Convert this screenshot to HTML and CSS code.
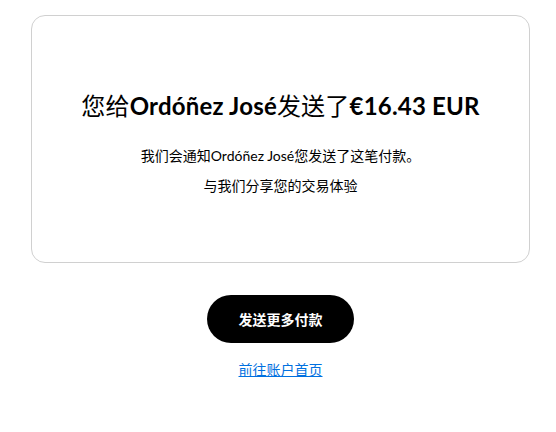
FILE: index.html
```html
<!DOCTYPE html>
<html lang="zh-CN">
<head>
<meta charset="utf-8">
<link rel="stylesheet" href="styles.css">
</head>
<body>
<main class="page">
  <section class="card">
    <h1 class="title">您给<b>Ordóñez José</b>发送了<b>€16.43 EUR</b></h1>
    <p class="line">我们会通知Ordóñez José您发送了这笔付款。</p>
    <p class="line">与我们分享您的交易体验</p>
  </section>
  <div class="actions">
    <button class="btn">发送更多付款</button>
    <a class="link" href="#">前往账户首页</a>
  </div>
</main>
</body>
</html>
```
FILE: styles.css
```css
html, body { margin: 0; padding: 0; background: #fff; }
body {
  font-family: "Lato", "Noto Sans CJK SC", sans-serif;
  color: #000;
}
.page {
  width: 499px;
  margin: 15px 0 0 31px;
  display: flex;
  flex-direction: column;
  align-items: center;
}
.card {
  box-sizing: border-box;
  width: 499px;
  height: 248px;
  border: 1px solid #d0d0d0;
  border-radius: 14px;
  display: flex;
  flex-direction: column;
  align-items: center;
  padding-top: 74px;
}
.title {
  margin: 0;
  font-size: 24px;
  line-height: 32px;
  font-weight: 400;
  letter-spacing: 0.2px;
}
.title b { font-weight: 700; }
.line {
  margin: 0;
  font-size: 14px;
  line-height: 20px;
}
.title + .line { margin-top: 24px; }
.line + .line { margin-top: 10px; }
.actions {
  display: flex;
  flex-direction: column;
  align-items: center;
  margin-top: 32px;
}
.btn {
  width: 147px;
  height: 48px;
  border: 0;
  border-radius: 24px;
  background: #000;
  color: #fff;
  font-family: inherit;
  font-size: 14px;
  font-weight: 700;
}
.link {
  margin-top: 17px;
  color: #0070e0;
  font-size: 14px;
  line-height: 20px;
  text-decoration: underline;
}
```
